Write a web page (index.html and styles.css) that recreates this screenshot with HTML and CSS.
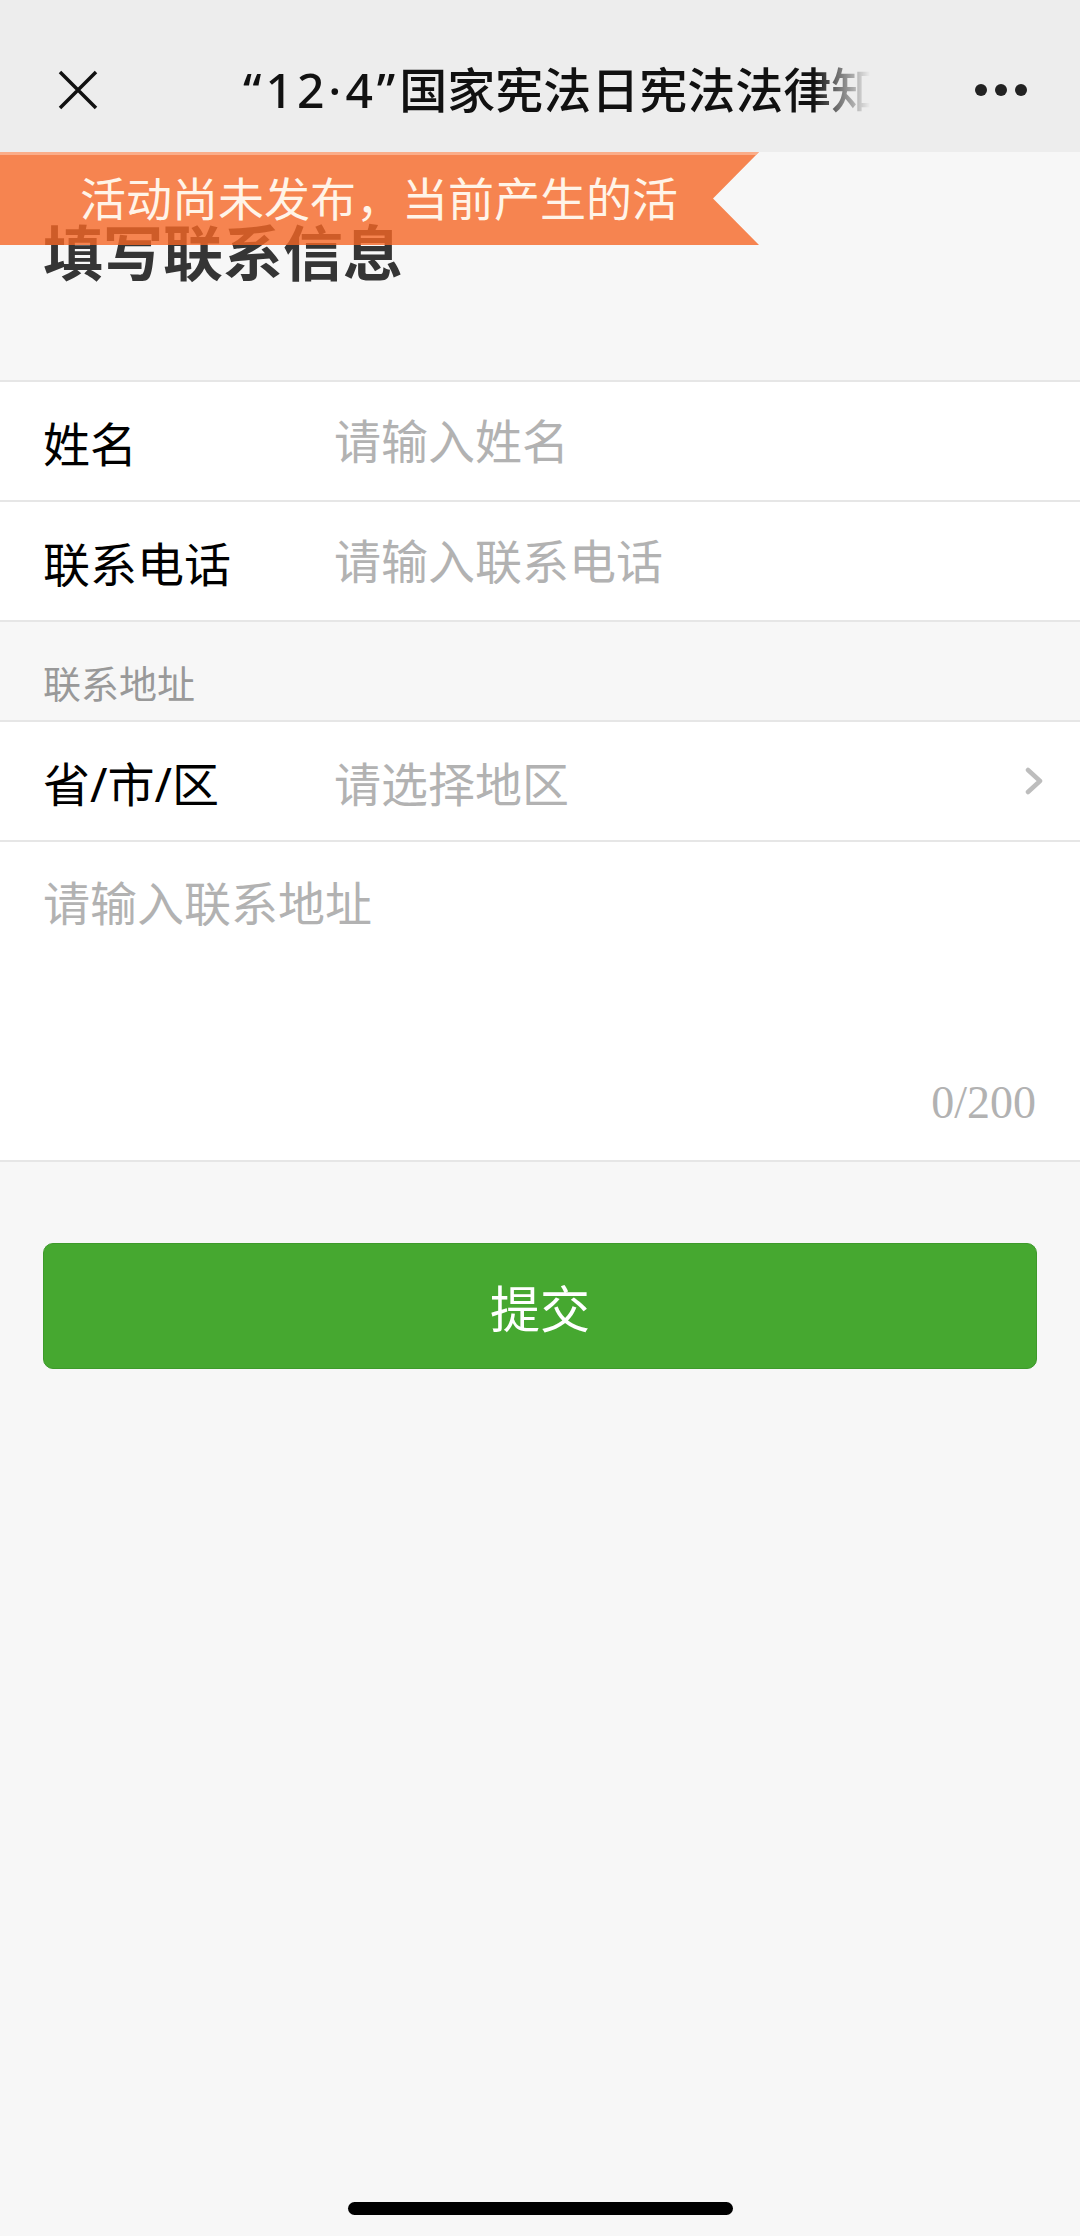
FILE: index.html
```html
<!DOCTYPE html>
<html lang="zh-CN">
<head>
    <meta charset="UTF-8">
    <title>填写联系信息</title>
    <link rel="stylesheet" href="styles.css">
</head>
<body>
<div class="navbar">
    <svg class="close" width="40" height="40" viewBox="0 0 40 40"><path d="M2 2L38 38M38 2L2 38"/></svg>
    <div class="nav-title"><span class="num">“12·4”</span>国家宪法日宪法法律知识竞赛</div>
    <div class="more"><i></i><i></i><i></i></div>
</div>

<div class="ribbon">活动尚未发布，当前产生的活</div>

<h1 class="page-title">填写联系信息</h1>

<div class="group">
    <label class="cell">
        <span class="cell-hd">姓名</span>
        <input class="cell-input" type="text" placeholder="请输入姓名">
    </label>
    <label class="cell">
        <span class="cell-hd">联系电话</span>
        <input class="cell-input" type="tel" placeholder="请输入联系电话">
    </label>
</div>

<div class="group-title">联系地址</div>
<div class="group">
    <div class="cell">
        <span class="cell-hd">省/市/区</span>
        <span class="cell-bd placeholder">请选择地区</span>
        <svg class="arrow" width="18" height="28" viewBox="0 0 18 28"><path d="M3 3L15 14L3 25"/></svg>
    </div>
    <div class="textarea-cell">
        <textarea placeholder="请输入联系地址" maxlength="200"></textarea>
        <div class="counter">0/200</div>
    </div>
</div>

<button class="btn-primary">提交</button>

<div class="home-bar"></div>
</body>
</html>
```

FILE: styles.css
```css
html, body{
    margin: 0;
    padding: 0;
}
body{
    display: flex;
    flex-direction: column;
    min-height: 100vh;
    background-color: #f7f7f7;
    font-family: "Noto Sans", "Noto Sans CJK SC", sans-serif;
    color: #000;
}

/* top bar */
.navbar{
    flex-shrink: 0;
    display: flex;
    align-items: center;
    height: 124px;
    padding-top: 28px;
    background-color: #ededed;
}
.close{
    margin-left: 58px;
    fill: none;
    stroke: #111;
    stroke-width: 3.5;
}
.nav-title{
    margin-left: 145px;
    width: 627px;
    overflow: hidden;
    white-space: nowrap;
    font-size: 48px;
    line-height: 60px;
    font-weight: 500;
    color: #111;
    -webkit-mask-image: linear-gradient(to right, #000 91%, transparent 100%);
    mask-image: linear-gradient(to right, #000 91%, transparent 100%);
}
.nav-title .num{
    letter-spacing: 4px;
}
.more{
    display: flex;
    gap: 8px;
    margin-left: auto;
    margin-right: 53px;
}
.more i{
    width: 12px;
    height: 12px;
    border-radius: 50%;
    background-color: #222;
}

/* notice ribbon lies over the heading */
.ribbon{
    position: absolute;
    top: 152px;
    left: 0;
    width: 759px;
    height: 93px;
    box-sizing: border-box;
    padding-left: 80px;
    font-family: "Noto Sans CJK SC", sans-serif;
    font-size: 46px;
    line-height: 88px;
    color: #fff4e8;
    background-color: rgba(245, 103, 37, 0.8);
    box-shadow: inset 0 3px 0 rgba(255, 200, 175, 0.6);
    clip-path: polygon(0 0, 100% 0, 713px 50%, 100% 100%, 0 100%);
}

.page-title{
    margin: 0;
    padding: 65px 43px 91px;
    font-size: 60px;
    line-height: 72px;
    font-weight: 700;
    color: #353535;
}

/* form */
.group{
    background-color: #fff;
    border-top: 2px solid #e6e6e6;
    border-bottom: 2px solid #e6e6e6;
}
.cell{
    display: flex;
    align-items: center;
    height: 118px;
    padding: 0 37px 0 43px;
    font-size: 47px;
}
.cell + .cell, .cell + .textarea-cell{
    border-top: 2px solid #e6e6e6;
}
.cell-hd{
    flex-shrink: 0;
    width: 291px;
}
.cell-input, .cell-bd{
    flex: 1;
    min-width: 0;
}
.cell-input, textarea{
    border: none;
    outline: none;
    padding: 0;
    margin: 0;
    background: transparent;
    font-family: inherit;
    font-size: 47px;
    color: #000;
}
.cell-input::placeholder, textarea::placeholder{
    color: #b2b2b2;
    opacity: 1;
}
.placeholder{
    color: #b2b2b2;
}
.arrow{
    fill: none;
    stroke: #bdbdbd;
    stroke-width: 4.5;
    stroke-linecap: round;
    stroke-linejoin: round;
}

.group-title{
    padding: 36px 43px 12px;
    font-size: 38px;
    line-height: 50px;
    color: #999;
}

.textarea-cell{
    padding: 31px 44px 27px 43px;
}
textarea{
    display: block;
    width: 100%;
    height: 200px;
    line-height: 60px;
    resize: none;
}
.counter{
    text-align: right;
    font-family: "Liberation Serif", serif;
    font-size: 46px;
    line-height: 60px;
    color: #b2b2b2;
}

.btn-primary{
    display: block;
    height: 126px;
    margin: 81px 43px 0;
    padding: 0;
    border: 1px solid #3e9a2b;
    border-radius: 10px;
    background-color: #46a830;
    color: #fff;
    font-family: "Noto Sans CJK SC", sans-serif;
    font-size: 50px;
    cursor: pointer;
}

.home-bar{
    align-self: center;
    width: 385px;
    height: 13px;
    margin-top: auto;
    margin-bottom: 21px;
    border-radius: 7px;
    background-color: #000;
}
```
